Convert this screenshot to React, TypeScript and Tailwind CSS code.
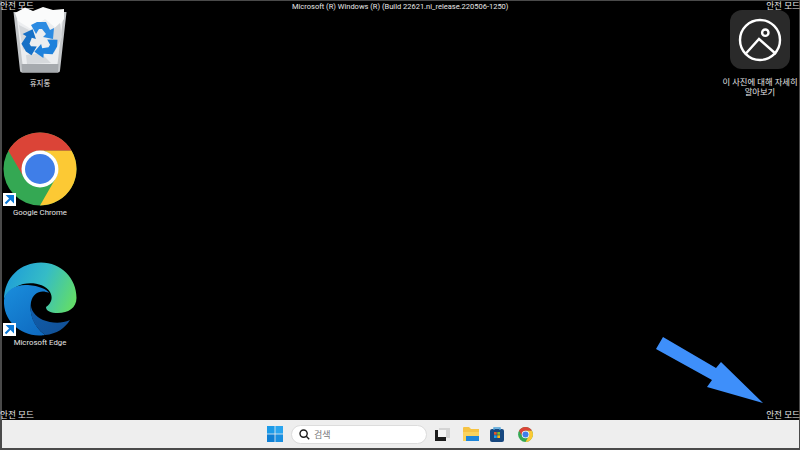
const font = { fontFamily: '"Noto Sans", "Noto Sans CJK KR", sans-serif' };
const latin = { fontFamily: 'Roboto, "Noto Sans", sans-serif' };

const ShortcutBadge = () => (
  <div className="absolute left-0 bottom-0 w-[13px] h-[13px] bg-white flex items-center justify-center">
    <svg width="11" height="11" viewBox="0 0 11 11">
      <path d="M1.5 9.5 L7 4 M4 2 H9 V7 Z" stroke="#0a78d7" strokeWidth="2" fill="#0a78d7" />
    </svg>
  </div>
);

const ChromeIcon = ({ size }: { size: number }) => (
  <svg width={size} height={size} viewBox="0 0 74 74">
    <circle cx="37" cy="37" r="36.5" fill="#34a853" />
    <path d="M37 0.5 A36.5 36.5 0 0 1 68.6 18.7 L37 18.7 A18.3 18.3 0 0 0 21.2 46 L5.4 18.7 A36.5 36.5 0 0 1 37 0.5 Z" fill="#db4437" />
    <path d="M68.6 18.7 A36.5 36.5 0 0 1 37 73.5 L52.8 46 A18.3 18.3 0 0 0 37 18.7 Z" fill="#fcc934" />
    <circle cx="37" cy="37" r="18.5" fill="#fff" />
    <circle cx="37" cy="37" r="15" fill="#3f7ee8" />
  </svg>
);

const EdgeIcon = () => (
  <svg width="74" height="74" viewBox="0 0 74 74">
    <defs>
      <linearGradient id="edgeTop" x1="0" y1="0.35" x2="1" y2="0.65">
        <stop offset="0" stopColor="#1f9ed8" />
        <stop offset="0.5" stopColor="#35bcc6" />
        <stop offset="1" stopColor="#62dc6a" />
      </linearGradient>
      <linearGradient id="edgeLeft" x1="0" y1="0" x2="0.7" y2="1">
        <stop offset="0" stopColor="#1a8edc" />
        <stop offset="1" stopColor="#0f6cc2" />
      </linearGradient>
      <linearGradient id="edgeLow" x1="0" y1="0" x2="1" y2="1">
        <stop offset="0" stopColor="#0f5fae" />
        <stop offset="1" stopColor="#124f94" />
      </linearGradient>
    </defs>
    <path d="M1 38 C1 15 18 0.5 38 0.5 C58 0.5 73.5 16 73.5 36 C73.5 46 65 51 55 51 C48 51 43 49 43 45 C49 41 50 35 47 30 C42 22 30 20 20 22 C10 25 2 32 1 38 Z" fill="url(#edgeTop)" />
    <path d="M1 38 C3 27 14 22 25 23 C36 24 44 27 46 31 C38 27 30 31 28 40 C26 50 30 64 42 73 C38 73.5 37 73.5 36 73.5 C16 73 0 58 1 38 Z" fill="url(#edgeLeft)" />
    <path d="M28 40 C26 52 30 64 42 73 C54 72 62 66 67 58 C58 62 48 61 40 58 C32 54 27 48 28 40 Z" fill="url(#edgeLow)" />
  </svg>
);

const RecycleBin = () => (
  <svg width="54" height="66" viewBox="0 0 54 66">
    <path d="M0.5 5 L53.5 5 L47 63.5 Q47 65.5 45 65.5 L9 65.5 Q7 65.5 7 63.5 Z" fill="#c3c6c9" />
    <path d="M4 12 L50 12 L44.5 57 L9.5 57 Z" fill="#eceef0" />
    <path d="M2 6 L12 0.5 L20 4 L30 0 L40 3 L51 2 L51 12 L44 22 L32 12 L18 22 L5 14 Z" fill="#fafbfb" />
    <path d="M6 18 L18 24 L10 44 Z M47 16 L49 30 L41 46 L36 26 Z M13 48 L28 46 L38 56 L14 57 Z" fill="#d6d9dc" />
    <path d="M8.5 57 L45.5 57 L45 65.5 L9 65.5 Z" fill="#a6aaae" />
    <g transform="translate(27 33)">
      <path d="M-9 -15 L-3 -18 L6 -18 L10 -10 L14 -12 L13 -1 L3 -3 L6 -6 L2 -11 L-1 -11 L-4 -6 Z" fill="#2c8be2" />
      <path d="M-9 -15 L-3 -18 L6 -18 L10 -10 L14 -12 L13 -1 L3 -3 L6 -6 L2 -11 L-1 -11 L-4 -6 Z" fill="#1f82dc" transform="rotate(120)" />
      <path d="M-9 -15 L-3 -18 L6 -18 L10 -10 L14 -12 L13 -1 L3 -3 L6 -6 L2 -11 L-1 -11 L-4 -6 Z" fill="#1670c6" transform="rotate(240)" />
    </g>
  </svg>
);

const Arrow = () => (
  <svg className="absolute left-0 top-0 pointer-events-none" width="800" height="450" viewBox="0 0 800 450">
    <polygon points="663,337 716,368 721,362 763,403 707,387 712,380 656,349" fill="#3e8ffa" />
  </svg>
);

const Safe = ({ className }: { className: string }) => (
  <span className={`absolute text-[8.6px] leading-[11px] text-[#e8e8e8] whitespace-nowrap ${className}`}>안전 모드</span>
);

const Shortcut = ({ label, children }: { label: string; children: React.ReactNode }) => (
  <div className="flex flex-col items-center w-[74px]">
    <div className="relative w-[74px] h-[74px]">
      {children}
      <ShortcutBadge />
    </div>
    <span className="text-[7.8px] leading-[14px] text-[#e6e6e6] whitespace-nowrap" style={latin}>{label}</span>
  </div>
);

export default function App() {
  return (
    <div className="relative w-[800px] h-[450px] overflow-hidden bg-[#4a4a4a] pl-[2px] pr-[1px] pt-[1px] pb-[2px] flex flex-col" style={font}>
      <div className="relative flex-1 bg-black flex justify-between">
        <Safe className="left-[-2px] top-0" />
        <Safe className="right-[-1px] top-0" />
        <Safe className="left-[-2px] bottom-[-1px]" />
        <Safe className="right-[-1px] bottom-[-1px]" />
        <span className="absolute top-0 left-[290px] text-[7.5px] leading-[11px] text-[#e8e8e8] whitespace-nowrap" style={latin}>
          Microsoft (R) Windows (R) (Build 22621.ni_release.220506-1250)
        </span>

        <div className="relative flex flex-col items-start pl-[1px] pt-[6px]">
          <div className="flex flex-col items-center w-[74px]">
            <RecycleBin />
            <span className="mt-[4px] text-[7.5px] leading-[13px] text-[#e6e6e6]">휴지통</span>
          </div>
          <div className="mt-[42px]">
            <Shortcut label="Google Chrome">
              <ChromeIcon size={74} />
            </Shortcut>
          </div>
          <div className="mt-[42px]">
            <Shortcut label="Microsoft Edge">
              <EdgeIcon />
            </Shortcut>
          </div>
        </div>

        <div className="flex flex-col items-center w-[80px] pt-[9px] mr-[-1px]">
          <div className="w-[60px] h-[59px] rounded-[12px] bg-[#2a2a2a] flex items-center justify-center">
            <svg width="44" height="44" viewBox="0 0 44 44" fill="none" stroke="#fff" strokeWidth="2.4">
              <circle cx="22" cy="22" r="20" />
              <path d="M7 36.5 L21 21 L38 36" />
              <circle cx="27.3" cy="14.7" r="3.2" />
            </svg>
          </div>
          <span className="mt-[8px] text-[8.3px] leading-[10px] text-[#e6e6e6] text-center whitespace-nowrap">
            이 사진에 대해 자세히
            <br />
            알아보기
          </span>
        </div>
      </div>

      <div className="h-[28px] bg-[#eeeeee] flex items-center pl-[265px]">
        <svg width="16" height="16" viewBox="0 0 16 16">
          <path d="M0 0 H7.6 V7.6 H0 Z" fill="#1c9be8" />
          <path d="M8.4 0 H16 V7.6 H8.4 Z" fill="#2aa5ef" />
          <path d="M0 8.4 H7.6 V16 H0 Z" fill="#0f7fd4" />
          <path d="M8.4 8.4 H16 V16 H8.4 Z" fill="#1a8fe0" />
        </svg>
        <div className="ml-[8px] w-[136px] h-[19px] rounded-full bg-white border border-[#dcdcdc] flex items-center pl-[7px]">
          <svg width="11" height="11" viewBox="0 0 11 11" fill="none" stroke="#1a1a1a" strokeWidth="1.4">
            <circle cx="4.6" cy="4.6" r="3.6" />
            <path d="M7.3 7.3 L10.2 10.2" />
          </svg>
          <span className="ml-[4px] text-[9px] leading-[11px] text-[#777]">검색</span>
        </div>
        <svg className="ml-[8px]" width="15" height="13" viewBox="0 0 15 13">
          <rect x="4" y="0" width="11" height="10" fill="#d4d4d4" />
          <rect x="0" y="2" width="11" height="11" fill="#1c1c1c" />
          <rect x="3" y="2" width="8" height="7" fill="#f5f5f5" />
        </svg>
        <svg className="ml-[13px]" width="16" height="14" viewBox="0 0 16 14">
          <path d="M0 1 Q0 0 1 0 H6 L8 2 H16 V13 Q16 14 15 14 H1 Q0 14 0 13 Z" fill="#f6c343" />
          <rect x="0" y="5" width="16" height="9" fill="#fbd35c" />
          <rect x="3" y="9" width="13" height="5" fill="#1f86d8" />
        </svg>
        <svg className="ml-[11px]" width="14" height="15" viewBox="0 0 14 15">
          <rect x="0" y="2" width="14" height="13" rx="2" fill="#17477f" />
          <path d="M4 3 V1 H10 V3" fill="none" stroke="#4aa0d8" strokeWidth="1.4" />
          <rect x="4" y="5" width="2.7" height="2.7" fill="#e2572c" />
          <rect x="7.3" y="5" width="2.7" height="2.7" fill="#7fba2c" />
          <rect x="4" y="8.3" width="2.7" height="2.7" fill="#1fa2e8" />
          <rect x="7.3" y="8.3" width="2.7" height="2.7" fill="#fbb616" />
        </svg>
        <div className="ml-[14px]">
          <ChromeIcon size={15} />
        </div>
      </div>
      <Arrow />
    </div>
  );
}
